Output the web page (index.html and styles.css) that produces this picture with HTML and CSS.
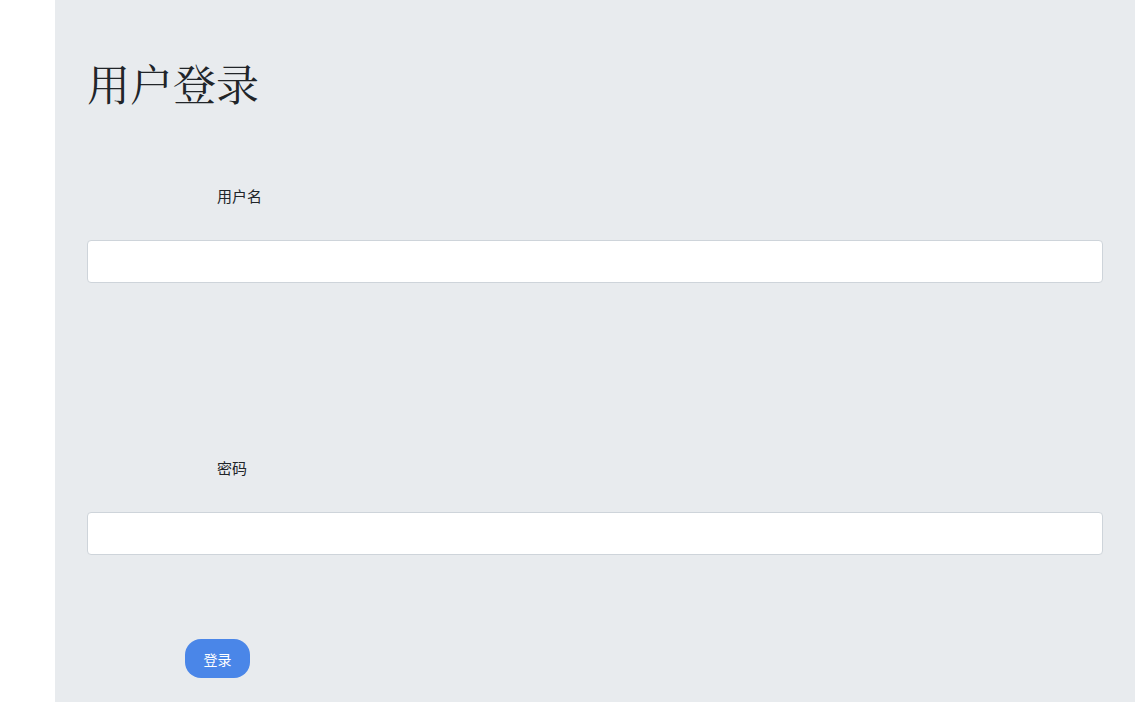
FILE: index.html
```html
<!DOCTYPE html>
<html lang="zh">
<head>
<meta charset="utf-8">
<title>用户登录</title>
<link rel="stylesheet" href="styles.css">
</head>
<body>
<main class="panel">
  <h1 class="title">用户登录</h1>
  <form class="form">
    <div class="field">
      <label class="label" for="u">用户名</label>
      <input class="input" id="u" type="text">
    </div>
    <div class="field field-pw">
      <label class="label" for="p">密码</label>
      <input class="input" id="p" type="password">
    </div>
    <button class="btn" type="button">登录</button>
  </form>
</main>
</body>
</html>
```

FILE: styles.css
```css
html, body {
  margin: 0;
  padding: 0;
  background: #ffffff;
  height: 100%;
}
body {
  font-family: "Noto Sans CJK SC", "Noto Sans", sans-serif;
  overflow: hidden;
}
.panel {
  box-sizing: border-box;
  margin-left: 55px;
  width: 1080px;
  height: 702px;
  background: #e8ebee;
  padding: 0 32px;
}
.title {
  margin: 0;
  padding-top: 57px;
  font-family: "Liberation Serif", "Noto Serif CJK SC", serif;
  font-weight: normal;
  font-size: 43px;
  line-height: 60px;
  color: #212529;
}
.form {
  display: flex;
  flex-direction: column;
}
.field {
  display: flex;
  flex-direction: column;
}
.label {
  margin-top: 69px;
  margin-left: 130px;
  font-size: 15px;
  line-height: 20px;
  color: #212529;
}
.input {
  box-sizing: border-box;
  margin-top: 34px;
  width: 1016px;
  height: 43px;
  border: 1px solid #ced4da;
  border-radius: 4px;
  background: #ffffff;
  outline: none;
}
.field-pw .label {
  margin-top: 175px;
}
.btn {
  align-self: flex-start;
  margin-top: 84px;
  margin-left: 98px;
  width: 65px;
  height: 39px;
  border: none;
  border-radius: 16px;
  background: #4a86e8;
  color: #ffffff;
  font-family: "Noto Sans CJK SC", sans-serif;
  font-size: 14px;
  padding: 0;
}
```
